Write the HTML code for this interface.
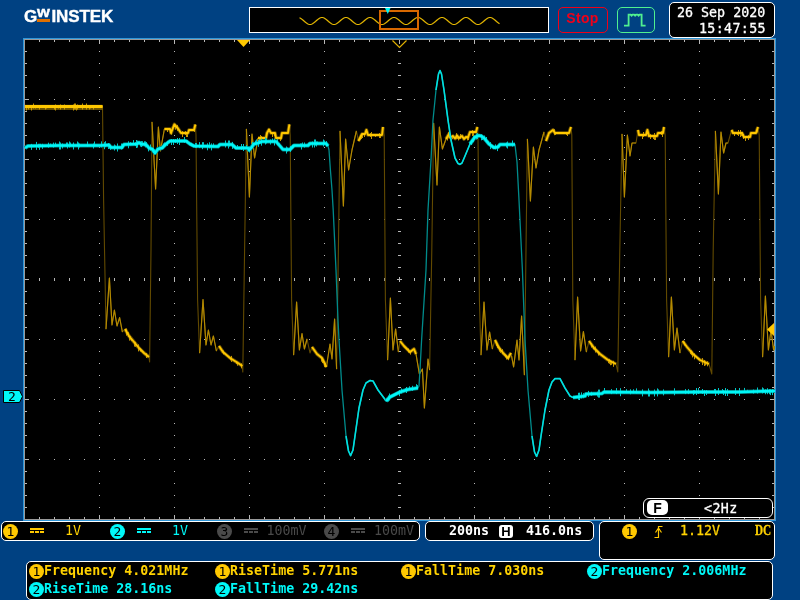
<!DOCTYPE html>
<html lang="en"><head><meta charset="utf-8"><title>GW Instek oscilloscope</title>
<style>
html,body{margin:0;padding:0;}
body{width:800px;height:600px;background:#004182;position:relative;overflow:hidden;font-family:"DejaVu Sans Mono", "Liberation Mono", monospace;font-size:13.33px;font-weight:bold;}
.abs{position:absolute;}
.m{font-weight:normal;-webkit-text-stroke:0.3px currentColor;}
.box{position:absolute;box-sizing:border-box;border:1px solid #fff;background:#000;border-radius:5px;}
.t{position:absolute;white-space:pre;line-height:16px;height:16px;}
.y{color:#ffd200;} .c{color:#00f8f8;} .w{color:#fff;} .g{color:#4a4a4a;}
.circ{position:absolute;width:15px;height:15px;border-radius:50%;color:#000;text-align:center;line-height:15px;font-size:13px;font-weight:normal;}
.logo{position:absolute;left:24px;top:5px;height:20px;color:#fff;font-family:"Liberation Sans",sans-serif;font-weight:bold;font-size:17px;line-height:20px;white-space:nowrap;-webkit-text-stroke:0.4px #fff;}
.plot{position:absolute;left:23px;top:38px;}
.dc{position:absolute;width:14px;height:2px;}
.dc i{position:absolute;left:0;top:3px;width:4px;height:2px;}
#screen{position:absolute;left:0;top:0;width:800px;height:600px;will-change:transform;}
</style></head><body><div id="screen">
<div class="logo"><span class="abs" style="left:0;top:1.5px">G</span><span class="abs" style="left:12.5px;top:-3.5px;font-size:15px;transform:scaleX(1.1);transform-origin:0 0">w</span><span class="abs" style="left:13px;top:14px;width:13px;height:3px;background:#e07000"></span><span class="abs" style="left:27.5px;top:1.5px;letter-spacing:-0.1px">INSTEK</span></div>
<div class="abs" style="left:249px;top:7px;width:300px;height:26px;box-sizing:border-box;border:1px solid #fff;background:#000;"><div class="abs" style="left:-1px;top:-1px"><svg width="300" height="26" viewBox="0 0 300 26"><path d="M50.5 10.8 L51.5 11.2 L52.5 11.9 L53.5 12.7 L54.5 13.5 L55.5 14.5 L56.5 15.3 L57.5 16.1 L58.5 16.8 L59.5 17.2 L60.5 17.5 L61.5 17.5 L62.5 17.2 L63.5 16.8 L64.5 16.1 L65.5 15.3 L66.5 14.5 L67.5 13.5 L68.5 12.7 L69.5 11.9 L70.5 11.2 L71.5 10.8 L72.5 10.5 L73.5 10.5 L74.5 10.8 L75.5 11.2 L76.5 11.9 L77.5 12.7 L78.5 13.5 L79.5 14.5 L80.5 15.3 L81.5 16.1 L82.5 16.8 L83.5 17.2 L84.5 17.5 L85.5 17.5 L86.5 17.2 L87.5 16.8 L88.5 16.1 L89.5 15.3 L90.5 14.5 L91.5 13.5 L92.5 12.7 L93.5 11.9 L94.5 11.2 L95.5 10.8 L96.5 10.5 L97.5 10.5 L98.5 10.8 L99.5 11.2 L100.5 11.9 L101.5 12.7 L102.5 13.5 L103.5 14.5 L104.5 15.3 L105.5 16.1 L106.5 16.8 L107.5 17.2 L108.5 17.5 L109.5 17.5 L110.5 17.2 L111.5 16.8 L112.5 16.1 L113.5 15.3 L114.5 14.5 L115.5 13.5 L116.5 12.7 L117.5 11.9 L118.5 11.2 L119.5 10.8 L120.5 10.5 L121.5 10.5 L122.5 10.8 L123.5 11.2 L124.5 11.9 L125.5 12.7 L126.5 13.5 L127.5 14.5 L128.5 15.3 L129.5 16.1 L130.5 16.8 L131.5 17.2 L132.5 17.5 L133.5 17.5 L134.5 17.2 L135.5 16.8 L136.5 16.1 L137.5 15.3 L138.5 14.5 L139.5 13.5 L140.5 12.7 L141.5 11.9 L142.5 11.2 L143.5 10.8 L144.5 10.5 L145.5 10.5 L146.5 10.8 L147.5 11.2 L148.5 11.9 L149.5 12.7 L150.5 13.5 L151.5 14.5 L152.5 15.3 L153.5 16.1 L154.5 16.8 L155.5 17.2 L156.5 17.5 L157.5 17.5 L158.5 17.2 L159.5 16.8 L160.5 16.1 L161.5 15.3 L162.5 14.5 L163.5 13.5 L164.5 12.7 L165.5 11.9 L166.5 11.2 L167.5 10.8 L168.5 10.5 L169.5 10.5 L170.5 10.8 L171.5 11.2 L172.5 11.9 L173.5 12.7 L174.5 13.5 L175.5 14.5 L176.5 15.3 L177.5 16.1 L178.5 16.8 L179.5 17.2 L180.5 17.5 L181.5 17.5 L182.5 17.2 L183.5 16.8 L184.5 16.1 L185.5 15.3 L186.5 14.5 L187.5 13.5 L188.5 12.7 L189.5 11.9 L190.5 11.2 L191.5 10.8 L192.5 10.5 L193.5 10.5 L194.5 10.8 L195.5 11.2 L196.5 11.9 L197.5 12.7 L198.5 13.5 L199.5 14.5 L200.5 15.3 L201.5 16.1 L202.5 16.8 L203.5 17.2 L204.5 17.5 L205.5 17.5 L206.5 17.2 L207.5 16.8 L208.5 16.1 L209.5 15.3 L210.5 14.5 L211.5 13.5 L212.5 12.7 L213.5 11.9 L214.5 11.2 L215.5 10.8 L216.5 10.5 L217.5 10.5 L218.5 10.8 L219.5 11.2 L220.5 11.9 L221.5 12.7 L222.5 13.5 L223.5 14.5 L224.5 15.3 L225.5 16.1 L226.5 16.8 L227.5 17.2 L228.5 17.5 L229.5 17.5 L230.5 17.2 L231.5 16.8 L232.5 16.1 L233.5 15.3 L234.5 14.5 L235.5 13.5 L236.5 12.7 L237.5 11.9 L238.5 11.2 L239.5 10.8 L240.5 10.5 L241.5 10.5 L242.5 10.8 L243.5 11.2 L244.5 11.9 L245.5 12.7 L246.5 13.5 L247.5 14.5 L248.5 15.3 L249.5 16.1 L250.5 16.8" fill="none" stroke="#e6b800" stroke-width="1.2"/><rect x="131" y="4" width="38" height="18" fill="none" stroke="#d86800" stroke-width="2"/><path d="M136 1h5.5l-2.75 6z" fill="#00f8f8"/></svg></div></div>
<div class="abs" style="left:558px;top:7px;width:50px;height:26px;box-sizing:border-box;border:1px solid #f00018;border-radius:5px;color:#f00018;font-family:'Liberation Sans',sans-serif;font-size:14px;line-height:21px;text-align:center;letter-spacing:0.3px;text-indent:-1px;">Stop</div>
<div class="abs" style="left:617px;top:7px;width:38px;height:26px;box-sizing:border-box;border:1px solid #50f090;border-radius:5px;"><svg class="abs" style="left:-1px;top:-1px" width="39" height="26" viewBox="617 7 39 26"><path d="M624 25.7h4.6v-11h2l1 1l1-1h1.5l1 1l1-1h1.5l1 1l1-1h2v11h4" fill="none" stroke="#50f090" stroke-width="1.8"/></svg></div>
<div class="box" style="left:669px;top:2px;width:106px;height:36px;font-weight:normal;"><span class="t m w" style="left:7px;top:1.5px;">26 Sep 2020</span><span class="t m w" style="right:8px;top:17.5px;letter-spacing:0.35px">15:47:55</span></div>
<svg class="plot" width="753" height="483" viewBox="23 38 753 483">
<rect x="23" y="38" width="753" height="483" fill="#2e96d8"/>
<rect x="24" y="39" width="751" height="481" fill="#9a9a9a"/>
<rect x="25" y="40" width="749" height="479" fill="#000"/>
<path d="M39 99h1v1h-1zM54 99h1v1h-1zM69 99h1v1h-1zM84 99h1v1h-1zM99 99h1v1h-1zM114 99h1v1h-1zM129 99h1v1h-1zM144 99h1v1h-1zM159 99h1v1h-1zM174 99h1v1h-1zM189 99h1v1h-1zM204 99h1v1h-1zM219 99h1v1h-1zM234 99h1v1h-1zM249 99h1v1h-1zM264 99h1v1h-1zM279 99h1v1h-1zM294 99h1v1h-1zM309 99h1v1h-1zM324 99h1v1h-1zM339 99h1v1h-1zM354 99h1v1h-1zM369 99h1v1h-1zM384 99h1v1h-1zM399 99h1v1h-1zM414 99h1v1h-1zM429 99h1v1h-1zM444 99h1v1h-1zM459 99h1v1h-1zM474 99h1v1h-1zM489 99h1v1h-1zM504 99h1v1h-1zM519 99h1v1h-1zM534 99h1v1h-1zM549 99h1v1h-1zM564 99h1v1h-1zM579 99h1v1h-1zM594 99h1v1h-1zM609 99h1v1h-1zM624 99h1v1h-1zM639 99h1v1h-1zM654 99h1v1h-1zM669 99h1v1h-1zM684 99h1v1h-1zM699 99h1v1h-1zM714 99h1v1h-1zM729 99h1v1h-1zM744 99h1v1h-1zM759 99h1v1h-1zM39 159h1v1h-1zM54 159h1v1h-1zM69 159h1v1h-1zM84 159h1v1h-1zM99 159h1v1h-1zM114 159h1v1h-1zM129 159h1v1h-1zM144 159h1v1h-1zM159 159h1v1h-1zM174 159h1v1h-1zM189 159h1v1h-1zM204 159h1v1h-1zM219 159h1v1h-1zM234 159h1v1h-1zM249 159h1v1h-1zM264 159h1v1h-1zM279 159h1v1h-1zM294 159h1v1h-1zM309 159h1v1h-1zM324 159h1v1h-1zM339 159h1v1h-1zM354 159h1v1h-1zM369 159h1v1h-1zM384 159h1v1h-1zM399 159h1v1h-1zM414 159h1v1h-1zM429 159h1v1h-1zM444 159h1v1h-1zM459 159h1v1h-1zM474 159h1v1h-1zM489 159h1v1h-1zM504 159h1v1h-1zM519 159h1v1h-1zM534 159h1v1h-1zM549 159h1v1h-1zM564 159h1v1h-1zM579 159h1v1h-1zM594 159h1v1h-1zM609 159h1v1h-1zM624 159h1v1h-1zM639 159h1v1h-1zM654 159h1v1h-1zM669 159h1v1h-1zM684 159h1v1h-1zM699 159h1v1h-1zM714 159h1v1h-1zM729 159h1v1h-1zM744 159h1v1h-1zM759 159h1v1h-1zM39 219h1v1h-1zM54 219h1v1h-1zM69 219h1v1h-1zM84 219h1v1h-1zM99 219h1v1h-1zM114 219h1v1h-1zM129 219h1v1h-1zM144 219h1v1h-1zM159 219h1v1h-1zM174 219h1v1h-1zM189 219h1v1h-1zM204 219h1v1h-1zM219 219h1v1h-1zM234 219h1v1h-1zM249 219h1v1h-1zM264 219h1v1h-1zM279 219h1v1h-1zM294 219h1v1h-1zM309 219h1v1h-1zM324 219h1v1h-1zM339 219h1v1h-1zM354 219h1v1h-1zM369 219h1v1h-1zM384 219h1v1h-1zM399 219h1v1h-1zM414 219h1v1h-1zM429 219h1v1h-1zM444 219h1v1h-1zM459 219h1v1h-1zM474 219h1v1h-1zM489 219h1v1h-1zM504 219h1v1h-1zM519 219h1v1h-1zM534 219h1v1h-1zM549 219h1v1h-1zM564 219h1v1h-1zM579 219h1v1h-1zM594 219h1v1h-1zM609 219h1v1h-1zM624 219h1v1h-1zM639 219h1v1h-1zM654 219h1v1h-1zM669 219h1v1h-1zM684 219h1v1h-1zM699 219h1v1h-1zM714 219h1v1h-1zM729 219h1v1h-1zM744 219h1v1h-1zM759 219h1v1h-1zM39 339h1v1h-1zM54 339h1v1h-1zM69 339h1v1h-1zM84 339h1v1h-1zM99 339h1v1h-1zM114 339h1v1h-1zM129 339h1v1h-1zM144 339h1v1h-1zM159 339h1v1h-1zM174 339h1v1h-1zM189 339h1v1h-1zM204 339h1v1h-1zM219 339h1v1h-1zM234 339h1v1h-1zM249 339h1v1h-1zM264 339h1v1h-1zM279 339h1v1h-1zM294 339h1v1h-1zM309 339h1v1h-1zM324 339h1v1h-1zM339 339h1v1h-1zM354 339h1v1h-1zM369 339h1v1h-1zM384 339h1v1h-1zM399 339h1v1h-1zM414 339h1v1h-1zM429 339h1v1h-1zM444 339h1v1h-1zM459 339h1v1h-1zM474 339h1v1h-1zM489 339h1v1h-1zM504 339h1v1h-1zM519 339h1v1h-1zM534 339h1v1h-1zM549 339h1v1h-1zM564 339h1v1h-1zM579 339h1v1h-1zM594 339h1v1h-1zM609 339h1v1h-1zM624 339h1v1h-1zM639 339h1v1h-1zM654 339h1v1h-1zM669 339h1v1h-1zM684 339h1v1h-1zM699 339h1v1h-1zM714 339h1v1h-1zM729 339h1v1h-1zM744 339h1v1h-1zM759 339h1v1h-1zM39 399h1v1h-1zM54 399h1v1h-1zM69 399h1v1h-1zM84 399h1v1h-1zM99 399h1v1h-1zM114 399h1v1h-1zM129 399h1v1h-1zM144 399h1v1h-1zM159 399h1v1h-1zM174 399h1v1h-1zM189 399h1v1h-1zM204 399h1v1h-1zM219 399h1v1h-1zM234 399h1v1h-1zM249 399h1v1h-1zM264 399h1v1h-1zM279 399h1v1h-1zM294 399h1v1h-1zM309 399h1v1h-1zM324 399h1v1h-1zM339 399h1v1h-1zM354 399h1v1h-1zM369 399h1v1h-1zM384 399h1v1h-1zM399 399h1v1h-1zM414 399h1v1h-1zM429 399h1v1h-1zM444 399h1v1h-1zM459 399h1v1h-1zM474 399h1v1h-1zM489 399h1v1h-1zM504 399h1v1h-1zM519 399h1v1h-1zM534 399h1v1h-1zM549 399h1v1h-1zM564 399h1v1h-1zM579 399h1v1h-1zM594 399h1v1h-1zM609 399h1v1h-1zM624 399h1v1h-1zM639 399h1v1h-1zM654 399h1v1h-1zM669 399h1v1h-1zM684 399h1v1h-1zM699 399h1v1h-1zM714 399h1v1h-1zM729 399h1v1h-1zM744 399h1v1h-1zM759 399h1v1h-1zM39 459h1v1h-1zM54 459h1v1h-1zM69 459h1v1h-1zM84 459h1v1h-1zM99 459h1v1h-1zM114 459h1v1h-1zM129 459h1v1h-1zM144 459h1v1h-1zM159 459h1v1h-1zM174 459h1v1h-1zM189 459h1v1h-1zM204 459h1v1h-1zM219 459h1v1h-1zM234 459h1v1h-1zM249 459h1v1h-1zM264 459h1v1h-1zM279 459h1v1h-1zM294 459h1v1h-1zM309 459h1v1h-1zM324 459h1v1h-1zM339 459h1v1h-1zM354 459h1v1h-1zM369 459h1v1h-1zM384 459h1v1h-1zM399 459h1v1h-1zM414 459h1v1h-1zM429 459h1v1h-1zM444 459h1v1h-1zM459 459h1v1h-1zM474 459h1v1h-1zM489 459h1v1h-1zM504 459h1v1h-1zM519 459h1v1h-1zM534 459h1v1h-1zM549 459h1v1h-1zM564 459h1v1h-1zM579 459h1v1h-1zM594 459h1v1h-1zM609 459h1v1h-1zM624 459h1v1h-1zM639 459h1v1h-1zM654 459h1v1h-1zM669 459h1v1h-1zM684 459h1v1h-1zM699 459h1v1h-1zM714 459h1v1h-1zM729 459h1v1h-1zM744 459h1v1h-1zM759 459h1v1h-1zM99 51h1v1h-1zM99 63h1v1h-1zM99 75h1v1h-1zM99 87h1v1h-1zM99 99h1v1h-1zM99 111h1v1h-1zM99 123h1v1h-1zM99 135h1v1h-1zM99 147h1v1h-1zM99 159h1v1h-1zM99 171h1v1h-1zM99 183h1v1h-1zM99 195h1v1h-1zM99 207h1v1h-1zM99 219h1v1h-1zM99 231h1v1h-1zM99 243h1v1h-1zM99 255h1v1h-1zM99 267h1v1h-1zM99 279h1v1h-1zM99 291h1v1h-1zM99 303h1v1h-1zM99 315h1v1h-1zM99 327h1v1h-1zM99 339h1v1h-1zM99 351h1v1h-1zM99 363h1v1h-1zM99 375h1v1h-1zM99 387h1v1h-1zM99 399h1v1h-1zM99 411h1v1h-1zM99 423h1v1h-1zM99 435h1v1h-1zM99 447h1v1h-1zM99 459h1v1h-1zM99 471h1v1h-1zM99 483h1v1h-1zM99 495h1v1h-1zM99 507h1v1h-1zM174 51h1v1h-1zM174 63h1v1h-1zM174 75h1v1h-1zM174 87h1v1h-1zM174 99h1v1h-1zM174 111h1v1h-1zM174 123h1v1h-1zM174 135h1v1h-1zM174 147h1v1h-1zM174 159h1v1h-1zM174 171h1v1h-1zM174 183h1v1h-1zM174 195h1v1h-1zM174 207h1v1h-1zM174 219h1v1h-1zM174 231h1v1h-1zM174 243h1v1h-1zM174 255h1v1h-1zM174 267h1v1h-1zM174 279h1v1h-1zM174 291h1v1h-1zM174 303h1v1h-1zM174 315h1v1h-1zM174 327h1v1h-1zM174 339h1v1h-1zM174 351h1v1h-1zM174 363h1v1h-1zM174 375h1v1h-1zM174 387h1v1h-1zM174 399h1v1h-1zM174 411h1v1h-1zM174 423h1v1h-1zM174 435h1v1h-1zM174 447h1v1h-1zM174 459h1v1h-1zM174 471h1v1h-1zM174 483h1v1h-1zM174 495h1v1h-1zM174 507h1v1h-1zM249 51h1v1h-1zM249 63h1v1h-1zM249 75h1v1h-1zM249 87h1v1h-1zM249 99h1v1h-1zM249 111h1v1h-1zM249 123h1v1h-1zM249 135h1v1h-1zM249 147h1v1h-1zM249 159h1v1h-1zM249 171h1v1h-1zM249 183h1v1h-1zM249 195h1v1h-1zM249 207h1v1h-1zM249 219h1v1h-1zM249 231h1v1h-1zM249 243h1v1h-1zM249 255h1v1h-1zM249 267h1v1h-1zM249 279h1v1h-1zM249 291h1v1h-1zM249 303h1v1h-1zM249 315h1v1h-1zM249 327h1v1h-1zM249 339h1v1h-1zM249 351h1v1h-1zM249 363h1v1h-1zM249 375h1v1h-1zM249 387h1v1h-1zM249 399h1v1h-1zM249 411h1v1h-1zM249 423h1v1h-1zM249 435h1v1h-1zM249 447h1v1h-1zM249 459h1v1h-1zM249 471h1v1h-1zM249 483h1v1h-1zM249 495h1v1h-1zM249 507h1v1h-1zM324 51h1v1h-1zM324 63h1v1h-1zM324 75h1v1h-1zM324 87h1v1h-1zM324 99h1v1h-1zM324 111h1v1h-1zM324 123h1v1h-1zM324 135h1v1h-1zM324 147h1v1h-1zM324 159h1v1h-1zM324 171h1v1h-1zM324 183h1v1h-1zM324 195h1v1h-1zM324 207h1v1h-1zM324 219h1v1h-1zM324 231h1v1h-1zM324 243h1v1h-1zM324 255h1v1h-1zM324 267h1v1h-1zM324 279h1v1h-1zM324 291h1v1h-1zM324 303h1v1h-1zM324 315h1v1h-1zM324 327h1v1h-1zM324 339h1v1h-1zM324 351h1v1h-1zM324 363h1v1h-1zM324 375h1v1h-1zM324 387h1v1h-1zM324 399h1v1h-1zM324 411h1v1h-1zM324 423h1v1h-1zM324 435h1v1h-1zM324 447h1v1h-1zM324 459h1v1h-1zM324 471h1v1h-1zM324 483h1v1h-1zM324 495h1v1h-1zM324 507h1v1h-1zM474 51h1v1h-1zM474 63h1v1h-1zM474 75h1v1h-1zM474 87h1v1h-1zM474 99h1v1h-1zM474 111h1v1h-1zM474 123h1v1h-1zM474 135h1v1h-1zM474 147h1v1h-1zM474 159h1v1h-1zM474 171h1v1h-1zM474 183h1v1h-1zM474 195h1v1h-1zM474 207h1v1h-1zM474 219h1v1h-1zM474 231h1v1h-1zM474 243h1v1h-1zM474 255h1v1h-1zM474 267h1v1h-1zM474 279h1v1h-1zM474 291h1v1h-1zM474 303h1v1h-1zM474 315h1v1h-1zM474 327h1v1h-1zM474 339h1v1h-1zM474 351h1v1h-1zM474 363h1v1h-1zM474 375h1v1h-1zM474 387h1v1h-1zM474 399h1v1h-1zM474 411h1v1h-1zM474 423h1v1h-1zM474 435h1v1h-1zM474 447h1v1h-1zM474 459h1v1h-1zM474 471h1v1h-1zM474 483h1v1h-1zM474 495h1v1h-1zM474 507h1v1h-1zM549 51h1v1h-1zM549 63h1v1h-1zM549 75h1v1h-1zM549 87h1v1h-1zM549 99h1v1h-1zM549 111h1v1h-1zM549 123h1v1h-1zM549 135h1v1h-1zM549 147h1v1h-1zM549 159h1v1h-1zM549 171h1v1h-1zM549 183h1v1h-1zM549 195h1v1h-1zM549 207h1v1h-1zM549 219h1v1h-1zM549 231h1v1h-1zM549 243h1v1h-1zM549 255h1v1h-1zM549 267h1v1h-1zM549 279h1v1h-1zM549 291h1v1h-1zM549 303h1v1h-1zM549 315h1v1h-1zM549 327h1v1h-1zM549 339h1v1h-1zM549 351h1v1h-1zM549 363h1v1h-1zM549 375h1v1h-1zM549 387h1v1h-1zM549 399h1v1h-1zM549 411h1v1h-1zM549 423h1v1h-1zM549 435h1v1h-1zM549 447h1v1h-1zM549 459h1v1h-1zM549 471h1v1h-1zM549 483h1v1h-1zM549 495h1v1h-1zM549 507h1v1h-1zM624 51h1v1h-1zM624 63h1v1h-1zM624 75h1v1h-1zM624 87h1v1h-1zM624 99h1v1h-1zM624 111h1v1h-1zM624 123h1v1h-1zM624 135h1v1h-1zM624 147h1v1h-1zM624 159h1v1h-1zM624 171h1v1h-1zM624 183h1v1h-1zM624 195h1v1h-1zM624 207h1v1h-1zM624 219h1v1h-1zM624 231h1v1h-1zM624 243h1v1h-1zM624 255h1v1h-1zM624 267h1v1h-1zM624 279h1v1h-1zM624 291h1v1h-1zM624 303h1v1h-1zM624 315h1v1h-1zM624 327h1v1h-1zM624 339h1v1h-1zM624 351h1v1h-1zM624 363h1v1h-1zM624 375h1v1h-1zM624 387h1v1h-1zM624 399h1v1h-1zM624 411h1v1h-1zM624 423h1v1h-1zM624 435h1v1h-1zM624 447h1v1h-1zM624 459h1v1h-1zM624 471h1v1h-1zM624 483h1v1h-1zM624 495h1v1h-1zM624 507h1v1h-1zM699 51h1v1h-1zM699 63h1v1h-1zM699 75h1v1h-1zM699 87h1v1h-1zM699 99h1v1h-1zM699 111h1v1h-1zM699 123h1v1h-1zM699 135h1v1h-1zM699 147h1v1h-1zM699 159h1v1h-1zM699 171h1v1h-1zM699 183h1v1h-1zM699 195h1v1h-1zM699 207h1v1h-1zM699 219h1v1h-1zM699 231h1v1h-1zM699 243h1v1h-1zM699 255h1v1h-1zM699 267h1v1h-1zM699 279h1v1h-1zM699 291h1v1h-1zM699 303h1v1h-1zM699 315h1v1h-1zM699 327h1v1h-1zM699 339h1v1h-1zM699 351h1v1h-1zM699 363h1v1h-1zM699 375h1v1h-1zM699 387h1v1h-1zM699 399h1v1h-1zM699 411h1v1h-1zM699 423h1v1h-1zM699 435h1v1h-1zM699 447h1v1h-1zM699 459h1v1h-1zM699 471h1v1h-1zM699 483h1v1h-1zM699 495h1v1h-1zM699 507h1v1h-1zM39 278h1v3h-1zM54 278h1v3h-1zM69 278h1v3h-1zM84 278h1v3h-1zM99 277h1v5h-1zM114 278h1v3h-1zM129 278h1v3h-1zM144 278h1v3h-1zM159 278h1v3h-1zM174 277h1v5h-1zM189 278h1v3h-1zM204 278h1v3h-1zM219 278h1v3h-1zM234 278h1v3h-1zM249 277h1v5h-1zM264 278h1v3h-1zM279 278h1v3h-1zM294 278h1v3h-1zM309 278h1v3h-1zM324 277h1v5h-1zM339 278h1v3h-1zM354 278h1v3h-1zM369 278h1v3h-1zM384 278h1v3h-1zM399 277h1v5h-1zM414 278h1v3h-1zM429 278h1v3h-1zM444 278h1v3h-1zM459 278h1v3h-1zM474 277h1v5h-1zM489 278h1v3h-1zM504 278h1v3h-1zM519 278h1v3h-1zM534 278h1v3h-1zM549 277h1v5h-1zM564 278h1v3h-1zM579 278h1v3h-1zM594 278h1v3h-1zM609 278h1v3h-1zM624 277h1v5h-1zM639 278h1v3h-1zM654 278h1v3h-1zM669 278h1v3h-1zM684 278h1v3h-1zM699 277h1v5h-1zM714 278h1v3h-1zM729 278h1v3h-1zM744 278h1v3h-1zM759 278h1v3h-1zM398 51h3v1h-3zM398 63h3v1h-3zM398 75h3v1h-3zM398 87h3v1h-3zM397 99h5v1h-5zM398 111h3v1h-3zM398 123h3v1h-3zM398 135h3v1h-3zM398 147h3v1h-3zM397 159h5v1h-5zM398 171h3v1h-3zM398 183h3v1h-3zM398 195h3v1h-3zM398 207h3v1h-3zM397 219h5v1h-5zM398 231h3v1h-3zM398 243h3v1h-3zM398 255h3v1h-3zM398 267h3v1h-3zM397 279h5v1h-5zM398 291h3v1h-3zM398 303h3v1h-3zM398 315h3v1h-3zM398 327h3v1h-3zM397 339h5v1h-5zM398 351h3v1h-3zM398 363h3v1h-3zM398 375h3v1h-3zM398 387h3v1h-3zM397 399h5v1h-5zM398 411h3v1h-3zM398 423h3v1h-3zM398 435h3v1h-3zM398 447h3v1h-3zM397 459h5v1h-5zM398 471h3v1h-3zM398 483h3v1h-3zM398 495h3v1h-3zM398 507h3v1h-3zM39 40h1v2h-1zM39 517h1v2h-1zM54 40h1v2h-1zM54 517h1v2h-1zM69 40h1v2h-1zM69 517h1v2h-1zM84 40h1v2h-1zM84 517h1v2h-1zM99 40h1v4h-1zM99 515h1v4h-1zM114 40h1v2h-1zM114 517h1v2h-1zM129 40h1v2h-1zM129 517h1v2h-1zM144 40h1v2h-1zM144 517h1v2h-1zM159 40h1v2h-1zM159 517h1v2h-1zM174 40h1v4h-1zM174 515h1v4h-1zM189 40h1v2h-1zM189 517h1v2h-1zM204 40h1v2h-1zM204 517h1v2h-1zM219 40h1v2h-1zM219 517h1v2h-1zM234 40h1v2h-1zM234 517h1v2h-1zM249 40h1v4h-1zM249 515h1v4h-1zM264 40h1v2h-1zM264 517h1v2h-1zM279 40h1v2h-1zM279 517h1v2h-1zM294 40h1v2h-1zM294 517h1v2h-1zM309 40h1v2h-1zM309 517h1v2h-1zM324 40h1v4h-1zM324 515h1v4h-1zM339 40h1v2h-1zM339 517h1v2h-1zM354 40h1v2h-1zM354 517h1v2h-1zM369 40h1v2h-1zM369 517h1v2h-1zM384 40h1v2h-1zM384 517h1v2h-1zM399 40h1v4h-1zM399 515h1v4h-1zM414 40h1v2h-1zM414 517h1v2h-1zM429 40h1v2h-1zM429 517h1v2h-1zM444 40h1v2h-1zM444 517h1v2h-1zM459 40h1v2h-1zM459 517h1v2h-1zM474 40h1v4h-1zM474 515h1v4h-1zM489 40h1v2h-1zM489 517h1v2h-1zM504 40h1v2h-1zM504 517h1v2h-1zM519 40h1v2h-1zM519 517h1v2h-1zM534 40h1v2h-1zM534 517h1v2h-1zM549 40h1v4h-1zM549 515h1v4h-1zM564 40h1v2h-1zM564 517h1v2h-1zM579 40h1v2h-1zM579 517h1v2h-1zM594 40h1v2h-1zM594 517h1v2h-1zM609 40h1v2h-1zM609 517h1v2h-1zM624 40h1v4h-1zM624 515h1v4h-1zM639 40h1v2h-1zM639 517h1v2h-1zM654 40h1v2h-1zM654 517h1v2h-1zM669 40h1v2h-1zM669 517h1v2h-1zM684 40h1v2h-1zM684 517h1v2h-1zM699 40h1v4h-1zM699 515h1v4h-1zM714 40h1v2h-1zM714 517h1v2h-1zM729 40h1v2h-1zM729 517h1v2h-1zM744 40h1v2h-1zM744 517h1v2h-1zM759 40h1v2h-1zM759 517h1v2h-1zM25 51h2v1h-2zM772 51h2v1h-2zM25 63h2v1h-2zM772 63h2v1h-2zM25 75h2v1h-2zM772 75h2v1h-2zM25 87h2v1h-2zM772 87h2v1h-2zM25 99h4v1h-4zM770 99h4v1h-4zM25 111h2v1h-2zM772 111h2v1h-2zM25 123h2v1h-2zM772 123h2v1h-2zM25 135h2v1h-2zM772 135h2v1h-2zM25 147h2v1h-2zM772 147h2v1h-2zM25 159h4v1h-4zM770 159h4v1h-4zM25 171h2v1h-2zM772 171h2v1h-2zM25 183h2v1h-2zM772 183h2v1h-2zM25 195h2v1h-2zM772 195h2v1h-2zM25 207h2v1h-2zM772 207h2v1h-2zM25 219h4v1h-4zM770 219h4v1h-4zM25 231h2v1h-2zM772 231h2v1h-2zM25 243h2v1h-2zM772 243h2v1h-2zM25 255h2v1h-2zM772 255h2v1h-2zM25 267h2v1h-2zM772 267h2v1h-2zM25 279h4v1h-4zM770 279h4v1h-4zM25 291h2v1h-2zM772 291h2v1h-2zM25 303h2v1h-2zM772 303h2v1h-2zM25 315h2v1h-2zM772 315h2v1h-2zM25 327h2v1h-2zM772 327h2v1h-2zM25 339h4v1h-4zM770 339h4v1h-4zM25 351h2v1h-2zM772 351h2v1h-2zM25 363h2v1h-2zM772 363h2v1h-2zM25 375h2v1h-2zM772 375h2v1h-2zM25 387h2v1h-2zM772 387h2v1h-2zM25 399h4v1h-4zM770 399h4v1h-4zM25 411h2v1h-2zM772 411h2v1h-2zM25 423h2v1h-2zM772 423h2v1h-2zM25 435h2v1h-2zM772 435h2v1h-2zM25 447h2v1h-2zM772 447h2v1h-2zM25 459h4v1h-4zM770 459h4v1h-4zM25 471h2v1h-2zM772 471h2v1h-2zM25 483h2v1h-2zM772 483h2v1h-2zM25 495h2v1h-2zM772 495h2v1h-2zM25 507h2v1h-2zM772 507h2v1h-2z" fill="#b8b8b8" shape-rendering="crispEdges"/>
<g fill="none" stroke-linejoin="round" stroke-linecap="butt">
<path d="M25.0 106.5 L102.5 106.5 L103.6 200.0 L106.0 329.0 L109.4 278.0 L112.0 325.0 L114.4 310.0 L117.0 326.0 L119.6 317.6 L122.4 332.0 L125.0 329.0 L129.0 336.0 L134.0 342.0 L139.0 348.0 L144.0 353.0 L149.0 357.0 L149.6 362.0 L151.0 250.0 L152.0 122.0 L155.6 189.0 L158.4 127.0 L160.4 151.0 L164.4 129.0 L170.0 129.0 L171.0 133.0 L174.4 124.4 L178.0 128.5 L181.0 133.0 L188.0 133.0 L189.0 130.0 L194.0 130.0 L195.4 124.5 L196.0 135.0 L197.6 300.0 L199.6 353.0 L203.0 299.6 L206.0 345.0 L208.4 330.0 L211.0 345.0 L213.4 336.0 L216.4 351.0 L219.0 346.0 L223.0 352.0 L230.0 358.0 L238.0 363.0 L242.4 366.0 L242.8 372.0 L244.6 250.0 L246.4 129.0 L249.4 197.0 L252.0 134.0 L254.6 158.0 L258.0 138.0 L266.0 138.0 L267.0 133.0 L269.0 129.6 L271.0 133.0 L275.0 133.0 L276.0 138.0 L281.0 138.0 L282.0 133.0 L288.0 133.0 L289.4 124.4 L290.2 135.0 L291.6 300.0 L293.6 355.0 L296.6 302.0 L299.4 350.0 L302.0 333.6 L304.4 349.0 L307.0 339.0 L310.0 353.0 L312.0 347.0 L317.0 354.0 L322.0 358.0 L325.0 364.0 L326.4 367.0 L330.0 344.0 L332.0 359.0 L334.6 319.0 L336.6 369.0 L338.4 250.0 L340.0 131.0 L343.4 206.0 L345.6 139.0 L348.6 170.0 L352.0 150.0 L356.4 131.0 L358.4 141.0 L362.0 134.0 L365.0 134.0 L366.4 130.0 L368.0 135.0 L382.0 135.0 L383.0 127.0 L384.2 135.0 L385.4 300.0 L387.6 360.0 L390.4 298.0 L393.0 350.0 L395.6 329.0 L398.4 352.0 L400.0 341.0 L404.0 346.0 L410.0 352.0 L414.0 349.0 L416.0 354.0 L419.4 374.0 L422.4 369.0 L424.4 408.0 L428.0 359.0 L429.6 370.0 L431.8 250.0 L433.6 123.0 L437.0 185.0 L439.4 127.0 L442.4 149.0 L446.0 139.0 L449.0 134.0 L450.0 137.5 L453.0 136.0 L455.0 138.5 L457.0 135.5 L459.0 138.0 L462.0 136.0 L464.0 139.0 L466.0 137.0 L468.0 137.5 L470.0 132.0 L476.0 132.0 L477.4 127.0 L478.0 135.0 L479.4 300.0 L481.0 355.0 L484.0 302.0 L487.0 350.0 L489.6 332.0 L492.4 349.0 L495.0 340.0 L499.0 348.0 L504.0 354.0 L508.0 358.0 L511.0 353.0 L513.6 367.0 L517.0 340.0 L519.0 360.0 L521.6 316.0 L524.4 375.0 L526.0 250.0 L527.4 139.0 L530.4 201.0 L533.4 147.0 L536.0 168.0 L539.0 150.0 L544.0 132.0 L546.0 141.0 L549.0 133.0 L553.0 130.0 L555.0 133.0 L569.0 133.0 L571.0 127.0 L571.8 135.0 L572.8 300.0 L575.0 360.0 L577.6 297.0 L580.6 351.0 L583.4 331.6 L586.4 352.0 L589.0 341.0 L594.0 348.0 L600.0 354.0 L608.0 360.0 L616.0 364.0 L617.8 372.0 L619.8 250.0 L622.0 134.0 L624.4 197.0 L627.4 135.0 L630.0 156.0 L632.0 143.0 L636.0 143.0 L638.0 130.0 L639.0 135.0 L646.0 135.0 L647.4 130.0 L649.0 136.0 L657.0 136.0 L658.0 133.0 L663.0 133.0 L664.0 127.0 L665.2 135.0 L666.6 300.0 L668.6 357.0 L671.4 297.0 L674.4 350.0 L677.0 328.0 L680.0 353.0 L682.6 341.0 L687.0 347.0 L693.0 354.0 L700.0 360.0 L709.0 364.0 L711.8 374.0 L713.2 250.0 L715.4 131.0 L718.4 194.0 L721.0 132.0 L723.6 153.0 L726.0 143.0 L728.0 143.0 L731.6 130.0 L733.0 133.0 L742.0 133.0 L744.0 137.0 L750.0 137.0 L751.0 133.0 L756.0 133.0 L758.0 127.0 L759.2 135.0 L760.6 300.0 L762.6 357.0 L765.4 296.0 L768.4 350.0 L771.0 330.0 L773.6 350.0 L774.5 346.0" stroke="#624a00" stroke-width="1.1"/>
<path d="M106.0 329.0 L109.4 278.0 L112.0 325.0 L114.4 310.0 L117.0 326.0 L119.6 317.6 L122.4 332.0" stroke="#b48a00" stroke-width="1.15"/>
<path d="M152.0 122.0 L155.6 189.0 L158.4 127.0 L160.4 151.0 L164.4 129.0" stroke="#b48a00" stroke-width="1.15"/>
<path d="M199.6 353.0 L203.0 299.6 L206.0 345.0 L208.4 330.0 L211.0 345.0 L213.4 336.0 L216.4 351.0" stroke="#b48a00" stroke-width="1.15"/>
<path d="M246.4 129.0 L249.4 197.0 L252.0 134.0 L254.6 158.0 L258.0 138.0" stroke="#b48a00" stroke-width="1.15"/>
<path d="M293.6 355.0 L296.6 302.0 L299.4 350.0 L302.0 333.6 L304.4 349.0 L307.0 339.0" stroke="#b48a00" stroke-width="1.15"/>
<path d="M326.4 367.0 L330.0 344.0 L332.0 359.0 L334.6 319.0 L336.6 369.0" stroke="#b48a00" stroke-width="1.15"/>
<path d="M340.0 131.0 L343.4 206.0 L345.6 139.0 L348.6 170.0 L352.0 150.0 L356.4 131.0" stroke="#b48a00" stroke-width="1.15"/>
<path d="M387.6 360.0 L390.4 298.0 L393.0 350.0 L395.6 329.0 L398.4 352.0" stroke="#b48a00" stroke-width="1.15"/>
<path d="M416.0 354.0 L419.4 374.0 L422.4 369.0 L424.4 408.0 L428.0 359.0 L429.6 370.0" stroke="#b48a00" stroke-width="1.15"/>
<path d="M433.6 123.0 L437.0 185.0 L439.4 127.0 L442.4 149.0 L446.0 139.0" stroke="#b48a00" stroke-width="1.15"/>
<path d="M481.0 355.0 L484.0 302.0 L487.0 350.0 L489.6 332.0 L492.4 349.0" stroke="#b48a00" stroke-width="1.15"/>
<path d="M511.0 353.0 L513.6 367.0 L517.0 340.0 L519.0 360.0 L521.6 316.0 L524.4 375.0" stroke="#b48a00" stroke-width="1.15"/>
<path d="M527.4 139.0 L530.4 201.0 L533.4 147.0 L536.0 168.0 L539.0 150.0 L544.0 132.0" stroke="#b48a00" stroke-width="1.15"/>
<path d="M575.0 360.0 L577.6 297.0 L580.6 351.0 L583.4 331.6 L586.4 352.0" stroke="#b48a00" stroke-width="1.15"/>
<path d="M622.0 134.0 L624.4 197.0 L627.4 135.0 L630.0 156.0 L632.0 143.0 L636.0 143.0" stroke="#b48a00" stroke-width="1.15"/>
<path d="M668.6 357.0 L671.4 297.0 L674.4 350.0 L677.0 328.0 L680.0 353.0" stroke="#b48a00" stroke-width="1.15"/>
<path d="M715.4 131.0 L718.4 194.0 L721.0 132.0 L723.6 153.0 L726.0 143.0 L728.0 143.0" stroke="#b48a00" stroke-width="1.15"/>
<path d="M762.6 357.0 L765.4 296.0 L768.4 350.0 L771.0 330.0 L773.6 350.0 L774.5 346.0" stroke="#b48a00" stroke-width="1.15"/>
<path d="M25.0 106.5 L102.5 106.5" stroke="#6a5000" stroke-width="3.6"/>
<path d="M125.0 329.0 L129.0 336.0 L134.0 342.0 L139.0 348.0 L144.0 353.0 L149.0 357.0" stroke="#6a5000" stroke-width="3.6"/>
<path d="M164.4 129.0 L170.0 129.0 L171.0 133.0 L174.4 124.4 L178.0 128.5 L181.0 133.0 L188.0 133.0 L189.0 130.0 L194.0 130.0 L195.4 124.5" stroke="#6a5000" stroke-width="3.6"/>
<path d="M219.0 346.0 L223.0 352.0 L230.0 358.0 L238.0 363.0 L242.4 366.0" stroke="#6a5000" stroke-width="3.6"/>
<path d="M258.0 138.0 L266.0 138.0 L267.0 133.0 L269.0 129.6 L271.0 133.0 L275.0 133.0 L276.0 138.0 L281.0 138.0 L282.0 133.0 L288.0 133.0 L289.4 124.4" stroke="#6a5000" stroke-width="3.6"/>
<path d="M312.0 347.0 L317.0 354.0 L322.0 358.0 L325.0 364.0 L326.4 367.0" stroke="#6a5000" stroke-width="3.6"/>
<path d="M358.4 141.0 L362.0 134.0 L365.0 134.0 L366.4 130.0 L368.0 135.0 L382.0 135.0 L383.0 127.0" stroke="#6a5000" stroke-width="3.6"/>
<path d="M400.0 341.0 L404.0 346.0 L410.0 352.0 L414.0 349.0 L416.0 354.0" stroke="#6a5000" stroke-width="3.6"/>
<path d="M446.0 139.0 L449.0 134.0 L450.0 137.5 L453.0 136.0 L455.0 138.5 L457.0 135.5 L459.0 138.0 L462.0 136.0 L464.0 139.0 L466.0 137.0 L468.0 137.5 L470.0 132.0 L476.0 132.0 L477.4 127.0" stroke="#6a5000" stroke-width="3.6"/>
<path d="M495.0 340.0 L499.0 348.0 L504.0 354.0 L508.0 358.0 L511.0 353.0" stroke="#6a5000" stroke-width="3.6"/>
<path d="M546.0 141.0 L549.0 133.0 L553.0 130.0 L555.0 133.0 L569.0 133.0 L571.0 127.0" stroke="#6a5000" stroke-width="3.6"/>
<path d="M589.0 341.0 L594.0 348.0 L600.0 354.0 L608.0 360.0 L616.0 364.0" stroke="#6a5000" stroke-width="3.6"/>
<path d="M638.0 130.0 L639.0 135.0 L646.0 135.0 L647.4 130.0 L649.0 136.0 L657.0 136.0 L658.0 133.0 L663.0 133.0 L664.0 127.0" stroke="#6a5000" stroke-width="3.6"/>
<path d="M682.6 341.0 L687.0 347.0 L693.0 354.0 L700.0 360.0 L709.0 364.0" stroke="#6a5000" stroke-width="3.6"/>
<path d="M731.6 130.0 L733.0 133.0 L742.0 133.0 L744.0 137.0 L750.0 137.0 L751.0 133.0 L756.0 133.0 L758.0 127.0" stroke="#6a5000" stroke-width="3.6"/>
<path d="M25 109H102.5" stroke="#8a6a00" stroke-width="1.6"/>
<path d="M26.5 105.5V110.5M28.5 105.5V109.5M31.5 105.5V110.5M33.5 103.5V108.5M35.5 105.5V108.5M39.5 105.5V109.5M45.5 105.5V109.5M46.5 105.5V108.5M54.5 105.5V109.5M55.5 104.5V110.5M58.5 105.5V108.5M60.5 104.5V109.5M64.5 104.5V109.5M73.5 104.5V110.5M74.5 103.5V109.5M75.5 103.5V109.5M76.5 105.5V110.5M77.5 104.5V109.5M82.5 103.5V109.5M86.5 103.5V109.5M89.5 105.5V109.5M90.5 105.5V108.5M93.5 105.5V109.5M126.5 328.6V335.6M128.5 332.1V337.1M129.5 335.6V340.6M130.5 335.8V339.8M131.5 338.0V341.0M134.5 341.6V346.6M135.5 341.8V346.8M138.5 344.4V351.4M140.5 348.5V351.5M146.5 353.0V358.0M167.5 128.0V132.0M171.5 129.7V134.7M175.5 124.7V129.7M177.5 124.9V130.9M182.5 131.0V137.0M185.5 131.0V135.0M186.5 132.0V137.0M187.5 132.0V137.0M194.5 127.0V132.0M223.5 350.4V354.4M230.5 357.3V360.3M231.5 355.9V361.9M236.5 361.1V364.1M237.5 361.7V365.7M241.5 363.4V368.4M259.5 137.0V141.0M260.5 135.0V141.0M261.5 136.0V142.0M267.5 131.2V134.2M272.5 132.0V137.0M274.5 132.0V136.0M280.5 137.0V141.0M281.5 134.5V139.5M321.5 356.6V361.6M322.5 358.0V363.0M324.5 362.0V367.0M325.5 363.1V367.1M360.5 134.9V139.9M361.5 134.0V139.0M362.5 133.0V138.0M364.5 133.0V137.0M370.5 133.0V137.0M371.5 132.0V139.0M375.5 134.0V137.0M379.5 133.0V138.0M380.5 134.0V138.0M408.5 348.5V352.5M410.5 350.6V354.6M414.5 349.2V352.2M447.5 135.5V140.5M448.5 131.8V137.8M450.5 136.2V139.2M452.5 135.2V139.2M456.5 133.2V139.2M457.5 135.1V139.1M458.5 136.4V140.4M460.5 134.0V139.0M467.5 136.4V140.4M468.5 135.1V140.1M472.5 130.0V136.0M473.5 131.0V136.0M476.5 129.2V133.2M496.5 342.0V346.0M497.5 344.0V348.0M499.5 346.6V351.6M500.5 347.8V352.8M502.5 349.2V354.2M505.5 354.5V357.5M506.5 355.5V359.5M508.5 356.2V360.2M509.5 354.5V357.5M554.5 129.2V135.2M555.5 132.0V135.0M566.5 132.0V135.0M567.5 132.0V136.0M591.5 343.5V347.5M593.5 346.3V349.3M595.5 346.5V352.5M598.5 351.5V355.5M608.5 359.2V363.2M609.5 358.8V363.8M610.5 360.2V365.2M611.5 360.8V364.8M613.5 360.8V366.8M642.5 134.0V139.0M643.5 132.0V137.0M647.5 129.4V133.4M648.5 133.1V137.1M650.5 134.0V139.0M653.5 135.0V139.0M654.5 133.0V140.0M655.5 135.0V140.0M661.5 131.0V135.0M662.5 131.0V137.0M663.5 129.0V132.0M684.5 341.6V345.6M690.5 350.1V354.1M691.5 350.2V355.2M692.5 351.4V357.4M694.5 353.3V359.3M702.5 358.1V365.1M704.5 360.0V366.0M705.5 361.4V365.4M707.5 361.3V366.3M734.5 132.0V136.0M737.5 132.0V135.0M738.5 130.0V136.0M740.5 130.0V137.0M741.5 132.0V136.0M742.5 132.0V136.0M743.5 134.0V139.0M745.5 136.0V141.0M748.5 135.0V140.0M757.5 127.5V132.5" stroke="#c89800" stroke-width="1"/>
<path d="M25.0 106.5 L102.5 106.5" stroke="#ffc800" stroke-width="1.9"/>
<path d="M125.0 329.0 L129.0 336.0 L134.0 342.0 L139.0 348.0 L144.0 353.0 L149.0 357.0" stroke="#ffc800" stroke-width="1.9"/>
<path d="M164.4 129.0 L170.0 129.0 L171.0 133.0 L174.4 124.4 L178.0 128.5 L181.0 133.0 L188.0 133.0 L189.0 130.0 L194.0 130.0 L195.4 124.5" stroke="#ffc800" stroke-width="1.9"/>
<path d="M219.0 346.0 L223.0 352.0 L230.0 358.0 L238.0 363.0 L242.4 366.0" stroke="#ffc800" stroke-width="1.9"/>
<path d="M258.0 138.0 L266.0 138.0 L267.0 133.0 L269.0 129.6 L271.0 133.0 L275.0 133.0 L276.0 138.0 L281.0 138.0 L282.0 133.0 L288.0 133.0 L289.4 124.4" stroke="#ffc800" stroke-width="1.9"/>
<path d="M312.0 347.0 L317.0 354.0 L322.0 358.0 L325.0 364.0 L326.4 367.0" stroke="#ffc800" stroke-width="1.9"/>
<path d="M358.4 141.0 L362.0 134.0 L365.0 134.0 L366.4 130.0 L368.0 135.0 L382.0 135.0 L383.0 127.0" stroke="#ffc800" stroke-width="1.9"/>
<path d="M400.0 341.0 L404.0 346.0 L410.0 352.0 L414.0 349.0 L416.0 354.0" stroke="#ffc800" stroke-width="1.9"/>
<path d="M446.0 139.0 L449.0 134.0 L450.0 137.5 L453.0 136.0 L455.0 138.5 L457.0 135.5 L459.0 138.0 L462.0 136.0 L464.0 139.0 L466.0 137.0 L468.0 137.5 L470.0 132.0 L476.0 132.0 L477.4 127.0" stroke="#ffc800" stroke-width="1.9"/>
<path d="M495.0 340.0 L499.0 348.0 L504.0 354.0 L508.0 358.0 L511.0 353.0" stroke="#ffc800" stroke-width="1.9"/>
<path d="M546.0 141.0 L549.0 133.0 L553.0 130.0 L555.0 133.0 L569.0 133.0 L571.0 127.0" stroke="#ffc800" stroke-width="1.9"/>
<path d="M589.0 341.0 L594.0 348.0 L600.0 354.0 L608.0 360.0 L616.0 364.0" stroke="#ffc800" stroke-width="1.9"/>
<path d="M638.0 130.0 L639.0 135.0 L646.0 135.0 L647.4 130.0 L649.0 136.0 L657.0 136.0 L658.0 133.0 L663.0 133.0 L664.0 127.0" stroke="#ffc800" stroke-width="1.9"/>
<path d="M682.6 341.0 L687.0 347.0 L693.0 354.0 L700.0 360.0 L709.0 364.0" stroke="#ffc800" stroke-width="1.9"/>
<path d="M731.6 130.0 L733.0 133.0 L742.0 133.0 L744.0 137.0 L750.0 137.0 L751.0 133.0 L756.0 133.0 L758.0 127.0" stroke="#ffc800" stroke-width="1.9"/>
<path d="M25 106.5H102.5" stroke="#ffc800" stroke-width="3"/>
<path d="M25.0 148.0 L28.0 146.0 L60.0 145.5 L100.0 145.5 L109.0 145.0 L111.0 147.5 L122.0 147.5 L124.0 144.5 L137.0 144.0 L139.0 142.5 L141.0 144.0 L146.0 144.5 L149.0 148.0 L152.0 149.0 L155.0 153.0 L158.0 149.0 L162.0 148.0 L166.0 144.0 L170.0 141.0 L186.0 141.0 L190.0 144.0 L194.0 146.0 L218.0 146.5 L220.0 144.5 L232.0 144.5 L236.0 148.0 L248.0 148.0 L249.0 150.0 L251.0 148.0 L254.0 144.0 L258.0 143.0 L262.0 141.5 L276.0 141.5 L280.0 146.0 L283.0 149.5 L290.0 149.5 L294.0 145.5 L308.0 145.5 L310.0 143.5 L326.0 143.5 L328.0 146.0 L329.0 150.0 L330.4 170.0 L332.0 190.0 L333.2 210.0 L336.0 270.0 L338.0 320.0 L339.0 340.0 L342.0 390.0 L346.0 436.0 L348.5 451.0 L350.6 455.6 L353.0 450.0 L355.0 436.0 L359.0 408.0 L363.0 390.0 L366.0 383.0 L370.0 380.5 L373.0 381.0 L378.0 390.0 L384.0 398.0 L386.0 401.0 L390.0 397.0 L394.0 395.0 L400.0 392.0 L408.0 389.5 L418.0 388.0 L419.0 386.0 L420.0 370.0 L421.6 340.0 L426.0 270.0 L428.0 210.0 L431.0 160.0 L433.0 120.0 L436.0 90.0 L438.5 74.0 L440.0 70.5 L441.5 74.0 L444.0 90.0 L448.0 120.0 L451.0 140.0 L455.0 158.0 L458.0 163.5 L460.0 164.4 L462.0 163.0 L465.0 156.0 L470.0 144.0 L475.0 137.0 L479.0 135.6 L481.0 136.0 L484.0 138.0 L489.0 144.0 L494.0 147.6 L498.0 147.0 L500.0 144.5 L515.0 144.5 L515.6 150.0 L517.0 162.0 L519.0 200.0 L522.4 270.0 L525.0 340.0 L528.0 390.0 L532.0 436.0 L534.5 452.0 L536.6 456.4 L539.0 450.0 L541.0 436.0 L545.0 410.0 L549.0 390.0 L552.0 382.0 L555.0 378.6 L560.0 378.6 L565.0 388.0 L570.0 396.0 L573.0 397.5 L585.0 396.0 L586.0 394.0 L602.0 393.5 L604.0 392.0 L650.0 392.5 L700.0 392.0 L740.0 392.0 L775.0 391.0" stroke="#008c8c" stroke-width="1.3"/>
<path d="M346.0 436.0 L348.5 451.0 L350.6 455.6 L353.0 450.0 L355.0 436.0 L359.0 408.0 L363.0 390.0 L366.0 383.0 L370.0 380.5 L373.0 381.0 L378.0 390.0 L384.0 398.0 L386.0 401.0" stroke="#00e0e0" stroke-width="1.6"/>
<path d="M436.0 90.0 L438.5 74.0 L440.0 70.5 L441.5 74.0 L444.0 90.0 L448.0 120.0 L451.0 140.0 L455.0 158.0 L458.0 163.5 L460.0 164.4 L462.0 163.0 L465.0 156.0 L470.0 144.0" stroke="#00e0e0" stroke-width="1.6"/>
<path d="M532.0 436.0 L534.5 452.0 L536.6 456.4 L539.0 450.0 L541.0 436.0 L545.0 410.0 L549.0 390.0 L552.0 382.0 L555.0 378.6 L560.0 378.6 L565.0 388.0 L570.0 396.0 L573.0 397.5" stroke="#00e0e0" stroke-width="1.6"/>
<path d="M25.0 148.0 L28.0 146.0 L60.0 145.5 L100.0 145.5 L109.0 145.0 L111.0 147.5 L122.0 147.5 L124.0 144.5 L137.0 144.0 L139.0 142.5 L141.0 144.0 L146.0 144.5 L149.0 148.0 L152.0 149.0 L155.0 153.0 L158.0 149.0 L162.0 148.0 L166.0 144.0 L170.0 141.0 L186.0 141.0 L190.0 144.0 L194.0 146.0 L218.0 146.5 L220.0 144.5 L232.0 144.5 L236.0 148.0 L248.0 148.0 L249.0 150.0 L251.0 148.0 L254.0 144.0 L258.0 143.0 L262.0 141.5 L276.0 141.5 L280.0 146.0 L283.0 149.5 L290.0 149.5 L294.0 145.5 L308.0 145.5 L310.0 143.5 L326.0 143.5 L328.0 146.0" stroke="#008a8a" stroke-width="4"/>
<path d="M386.0 401.0 L390.0 397.0 L394.0 395.0 L400.0 392.0 L408.0 389.5 L418.0 388.0" stroke="#008a8a" stroke-width="4"/>
<path d="M470.0 144.0 L475.0 137.0 L479.0 135.6 L481.0 136.0 L484.0 138.0 L489.0 144.0 L494.0 147.6 L498.0 147.0 L500.0 144.5 L515.0 144.5" stroke="#008a8a" stroke-width="4"/>
<path d="M573.0 397.5 L585.0 396.0 L586.0 394.0 L602.0 393.5 L604.0 392.0 L650.0 392.5 L700.0 392.0 L740.0 392.0 L775.0 391.0" stroke="#008a8a" stroke-width="4"/>
<path d="M31.5 143.9V149.9M36.5 141.9V149.9M38.5 143.8V147.8M39.5 143.8V149.8M40.5 143.8V146.8M42.5 143.8V148.8M48.5 142.7V147.7M50.5 143.6V146.6M53.5 142.6V147.6M55.5 142.6V146.6M59.5 141.5V149.5M60.5 142.5V149.5M62.5 143.5V148.5M66.5 142.5V146.5M67.5 142.5V148.5M69.5 141.5V147.5M70.5 142.5V146.5M73.5 142.5V149.5M77.5 141.5V146.5M78.5 142.5V149.5M79.5 143.5V147.5M87.5 141.5V146.5M93.5 143.5V148.5M94.5 141.5V146.5M101.5 141.4V147.4M104.5 142.2V149.2M105.5 141.2V147.2M108.5 143.0V149.0M109.5 143.6V148.6M110.5 144.9V149.9M114.5 144.5V150.5M115.5 145.5V148.5M117.5 143.5V151.5M121.5 143.5V149.5M122.5 143.8V148.8M128.5 141.3V148.3M130.5 142.2V145.2M133.5 140.1V145.1M135.5 142.1V146.1M136.5 140.0V148.0M137.5 140.6V147.6M140.5 141.6V146.6M141.5 141.1V147.1M142.5 141.2V146.2M144.5 141.3V146.3M145.5 141.4V147.4M146.5 142.1V147.1M148.5 145.4V151.4M150.5 144.5V150.5M153.5 148.0V153.0M154.5 149.3V154.3M159.5 146.6V149.6M163.5 143.5V148.5M164.5 142.5V146.5M167.5 140.9V145.9M171.5 139.0V145.0M173.5 139.0V145.0M175.5 139.0V143.0M177.5 138.0V144.0M179.5 138.0V145.0M184.5 137.0V143.0M187.5 140.1V143.1M191.5 142.8V145.8M195.5 143.0V148.0M196.5 143.1V148.1M199.5 142.1V148.1M202.5 142.2V149.2M203.5 142.2V147.2M207.5 143.3V150.3M209.5 142.3V148.3M211.5 143.4V150.4M213.5 143.4V147.4M225.5 140.5V147.5M228.5 140.5V148.5M229.5 140.5V146.5M232.5 141.9V148.9M237.5 145.0V149.0M241.5 144.0V150.0M242.5 146.0V149.0M243.5 144.0V151.0M246.5 145.0V149.0M249.5 146.5V152.5M252.5 142.0V148.0M255.5 140.6V144.6M256.5 139.4V145.4M258.5 139.8V146.8M259.5 139.4V143.4M261.5 138.7V145.7M265.5 137.5V144.5M266.5 138.5V143.5M270.5 139.5V144.5M272.5 138.5V142.5M274.5 138.5V145.5M277.5 139.2V145.2M279.5 143.4V146.4M286.5 146.5V153.5M287.5 147.5V151.5M290.5 146.0V152.0M292.5 145.0V148.0M300.5 143.5V146.5M301.5 143.5V149.5M302.5 142.5V146.5M304.5 142.5V147.5M312.5 141.5V147.5M314.5 139.5V147.5M315.5 139.5V145.5M316.5 141.5V146.5M317.5 141.5V144.5M323.5 139.5V146.5M324.5 140.5V144.5M326.5 141.1V146.1M388.5 395.5V401.5M389.5 393.5V400.5M399.5 390.2V396.2M401.5 388.5V393.5M405.5 388.3V391.3M406.5 387.0V393.0M409.5 386.3V390.3M412.5 385.8V390.8M416.5 384.2V389.2M417.5 385.1V389.1M471.5 139.9V144.9M473.5 136.1V142.1M476.5 133.5V139.5M477.5 133.1V139.1M481.5 134.3V140.3M482.5 135.0V140.0M484.5 135.6V139.6M486.5 137.0V142.0M488.5 141.4V144.4M490.5 142.1V149.1M495.5 144.4V149.4M497.5 145.1V151.1M506.5 142.5V147.5M507.5 141.5V148.5M512.5 140.5V146.5M578.5 392.8V399.8M579.5 392.7V399.7M581.5 392.4V398.4M583.5 393.2V398.2M588.5 390.9V396.9M591.5 391.8V395.8M597.5 391.6V396.6M598.5 389.6V397.6M599.5 389.6V397.6M604.5 388.0V393.0M611.5 389.1V394.1M616.5 388.1V394.1M620.5 388.2V396.2M626.5 389.2V393.2M630.5 389.3V394.3M633.5 389.3V393.3M636.5 388.4V393.4M642.5 389.4V396.4M648.5 388.5V396.5M649.5 390.5V396.5M654.5 389.5V396.5M657.5 388.4V396.4M658.5 389.4V393.4M663.5 389.4V395.4M674.5 388.3V395.3M685.5 389.1V394.1M688.5 389.1V394.1M693.5 390.1V395.1M694.5 390.1V394.1M696.5 388.0V395.0M698.5 388.0V394.0M702.5 389.0V394.0M704.5 390.0V396.0M706.5 390.0V395.0M714.5 389.0V393.0M715.5 389.0V396.0M718.5 388.0V395.0M722.5 389.0V393.0M723.5 390.0V395.0M725.5 388.0V396.0M727.5 389.0V396.0M735.5 388.0V395.0M739.5 388.0V396.0M744.5 387.9V392.9M747.5 389.8V392.8M753.5 389.6V393.6M757.5 387.5V393.5M762.5 387.4V393.4M763.5 388.3V392.3M765.5 389.3V394.3M767.5 388.2V394.2M769.5 389.2V394.2M770.5 389.1V395.1M772.5 389.1V395.1" stroke="#00c8c8" stroke-width="1"/>
<path d="M25.0 148.0 L28.0 146.0 L60.0 145.5 L100.0 145.5 L109.0 145.0 L111.0 147.5 L122.0 147.5 L124.0 144.5 L137.0 144.0 L139.0 142.5 L141.0 144.0 L146.0 144.5 L149.0 148.0 L152.0 149.0 L155.0 153.0 L158.0 149.0 L162.0 148.0 L166.0 144.0 L170.0 141.0 L186.0 141.0 L190.0 144.0 L194.0 146.0 L218.0 146.5 L220.0 144.5 L232.0 144.5 L236.0 148.0 L248.0 148.0 L249.0 150.0 L251.0 148.0 L254.0 144.0 L258.0 143.0 L262.0 141.5 L276.0 141.5 L280.0 146.0 L283.0 149.5 L290.0 149.5 L294.0 145.5 L308.0 145.5 L310.0 143.5 L326.0 143.5 L328.0 146.0" stroke="#00f8f8" stroke-width="2.6"/>
<path d="M386.0 401.0 L390.0 397.0 L394.0 395.0 L400.0 392.0 L408.0 389.5 L418.0 388.0" stroke="#00f8f8" stroke-width="2.6"/>
<path d="M470.0 144.0 L475.0 137.0 L479.0 135.6 L481.0 136.0 L484.0 138.0 L489.0 144.0 L494.0 147.6 L498.0 147.0 L500.0 144.5 L515.0 144.5" stroke="#00f8f8" stroke-width="2.6"/>
<path d="M573.0 397.5 L585.0 396.0 L586.0 394.0 L602.0 393.5 L604.0 392.0 L650.0 392.5 L700.0 392.0 L740.0 392.0 L775.0 391.0" stroke="#00f8f8" stroke-width="2.6"/>
</g>
<path d="M237 40h13l-6.5 7z" fill="#ffc800"/>
<path d="M392.5 40.5l7 7l7-7" fill="none" stroke="#e0b000" stroke-width="1.2"/>
<path d="M774 323v13l-7-6.5z" fill="#ffc800"/>
</svg>
<svg class="abs" style="left:3px;top:390px" width="21" height="13" viewBox="3 390 21 13"><path d="M3.5 390.5h16l3 6l-3 6h-16z" fill="#00f8f8" stroke="#000" stroke-width="1"/></svg>
<span class="t" style="left:8px;top:388.5px;color:#000;font-weight:normal;font-size:13px">2</span>

<div class="box" style="left:1px;top:521px;width:419px;height:20px;">
<span class="circ" style="left:1px;top:2px;background:#ffc800">1</span><span class="dc" style="left:28px;top:6px;background:#ffc800"><i style="background:#ffc800"></i><i style="background:#ffc800;left:5px"></i><i style="background:#ffc800;left:10px"></i></span><span class="t y" style="left:63px;top:1px;font-weight:normal">1V</span>
<span class="circ" style="left:108px;top:2px;background:#00f8f8">2</span><span class="dc" style="left:135px;top:6px;background:#00f8f8"><i style="background:#00f8f8"></i><i style="background:#00f8f8;left:5px"></i><i style="background:#00f8f8;left:10px"></i></span><span class="t c" style="left:170px;top:1px;font-weight:normal">1V</span>
<span class="circ" style="left:215px;top:2px;background:#4a4a4a">3</span><span class="dc" style="left:242px;top:6px;background:#4a4a4a"><i style="background:#4a4a4a"></i><i style="background:#4a4a4a;left:5px"></i><i style="background:#4a4a4a;left:10px"></i></span><span class="t g" style="left:264.5px;top:1px;font-weight:normal">100mV</span>
<span class="circ" style="left:322px;top:2px;background:#4a4a4a">4</span><span class="dc" style="left:349px;top:6px;background:#4a4a4a"><i style="background:#4a4a4a"></i><i style="background:#4a4a4a;left:5px"></i><i style="background:#4a4a4a;left:10px"></i></span><span class="t g" style="left:372px;top:1px;font-weight:normal">100mV</span>
</div>
<div class="box" style="left:425px;top:521px;width:169px;height:20px;"><span class="t w" style="left:23px;top:1px">200ns</span><span class="abs" style="left:73px;top:3px;width:14px;height:13px;background:#fff;border-radius:3px;color:#000;font-family:'Liberation Sans',sans-serif;font-size:13px;line-height:14px;text-align:center">H</span><span class="t w" style="left:100px;top:1px">416.0ns</span></div>
<div class="box" style="left:599px;top:521px;width:176px;height:39px;"><span class="circ" style="left:22px;top:2px;background:#ffc800">1</span><svg class="abs" style="left:53px;top:3px" width="12" height="14" viewBox="0 0 12 14"><path d="M1.5 12.5h4v-11h4M2.5 7.5l3-4.5l3 4.5" fill="none" stroke="#ffc800" stroke-width="1.2"/></svg><span class="t m y" style="left:80px;top:1px">1.12V</span><span class="t y" style="left:155px;top:1px;font-family:'Liberation Serif','DejaVu Serif',serif;font-size:14px;font-weight:bold;-webkit-text-stroke:0.3px currentColor;transform:scaleX(0.8);transform-origin:0 0;">DC</span></div>
<div class="box" style="left:26px;top:561px;width:747px;height:39px;">
<span class="circ" style="left:2px;top:2px;background:#ffc800">1</span><span class="t y" style="left:17px;top:1px">Frequency 4.021MHz</span>
<span class="circ" style="left:188px;top:2px;background:#ffc800">1</span><span class="t y" style="left:203px;top:1px">RiseTime 5.771ns</span>
<span class="circ" style="left:374px;top:2px;background:#ffc800">1</span><span class="t y" style="left:389px;top:1px">FallTime 7.030ns</span>
<span class="circ" style="left:560px;top:2px;background:#00f8f8">2</span><span class="t c" style="left:575px;top:1px">Frequency 2.006MHz</span>
<span class="circ" style="left:2px;top:20px;background:#00f8f8">2</span><span class="t c" style="left:17px;top:19px">RiseTime 28.16ns</span>
<span class="circ" style="left:188px;top:20px;background:#00f8f8">2</span><span class="t c" style="left:203px;top:19px">FallTime 29.42ns</span>
</div>
<div class="box" style="left:643px;top:498px;width:130px;height:20px;border-radius:6px"><span class="abs" style="left:3px;top:1px;width:21px;height:15px;background:#fff;border-radius:5px;color:#000;font-size:14px;line-height:16px;text-align:center;font-family:'Liberation Sans',sans-serif">F</span><span class="t m w" style="left:60px;top:2px;letter-spacing:0.4px">&lt;2Hz</span></div>
</div></body></html>
